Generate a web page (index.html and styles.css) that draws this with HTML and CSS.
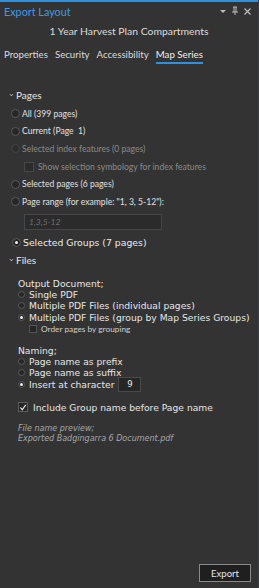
FILE: index.html
```html
<!DOCTYPE html>
<html lang="en">
<head>
    <meta charset="UTF-8">
    <title>Export Layout</title>
    <link rel="stylesheet" href="styles.css">
</head>
<body>
    <div class="panel">
        <div class="titlebar">
            <span class="title">Export Layout</span>
            <span class="wincontrols">
                <svg width="8" height="8" viewBox="0 0 8 8"><path d="M1 3 L7 3 L4 6 Z" fill="#bdbdbd"/></svg>
                <svg width="8" height="10" viewBox="0 0 8 10"><path d="M2 1 H6 M3 1 V6 M5 1 V6 M1 6 H7 M4 6 V9" stroke="#bdbdbd" stroke-width="1" fill="none"/></svg>
                <svg width="9" height="9" viewBox="0 0 9 9"><path d="M1.5 1.5 L7.5 7.5 M7.5 1.5 L1.5 7.5" stroke="#bdbdbd" stroke-width="1.2"/></svg>
            </span>
        </div>

        <div class="docname">1 Year Harvest Plan Compartments</div>

        <div class="tabs">
            <span class="tab">Properties</span>
            <span class="tab">Security</span>
            <span class="tab">Accessibility</span>
            <span class="tab active">Map Series</span>
        </div>

        <div class="group-head pages-head"><span class="chev">&#8964;</span>Pages</div>
        <div class="opt"><span class="radio"></span>All (399 pages)</div>
        <div class="opt"><span class="radio"></span>Current (Page&nbsp; 1)</div>
        <div class="opt disabled"><span class="radio"></span>Selected index features (0 pages)</div>
        <div class="opt sub disabled"><span class="check"></span>Show selection symbology for index features</div>
        <div class="opt"><span class="radio"></span>Selected pages (6 pages)</div>
        <div class="opt"><span class="radio"></span>Page range (for example: "1, 3, 5-12"):</div>
        <div class="range-box">1,3,5-12</div>
        <div class="opt big"><span class="radio on"></span>Selected Groups (7 pages)</div>

        <div class="group-head"><span class="chev">&#8964;</span>Files</div>

        <div class="files">
            <div class="label">Output Document;</div>
            <div class="vopt"><span class="radio"></span>Single PDF</div>
            <div class="vopt"><span class="radio"></span>Multiple PDF Files (individual pages)</div>
            <div class="vopt"><span class="radio on"></span>Multiple PDF Files (group by Map Series Groups)</div>
            <div class="vopt small"><span class="check"></span>Order pages by grouping</div>

            <div class="label naming">Naming;</div>
            <div class="vopt"><span class="radio"></span>Page name as prefix</div>
            <div class="vopt"><span class="radio"></span>Page name as suffix</div>
            <div class="vopt"><span class="radio on"></span>Insert at character <span class="charbox">9</span></div>

            <div class="vopt include"><span class="check checked">
                <svg width="9" height="9" viewBox="0 0 9 9"><path d="M1.5 4.5 L3.6 7 L7.6 1.5" stroke="#e8e8e8" stroke-width="1.3" fill="none"/></svg>
            </span>Include Group name before Page name</div>

            <div class="preview">
                File name preview;<br>
                Exported Badgingarra 6 Document.pdf
            </div>
        </div>

        <div class="footer">
            <button class="export">Export</button>
        </div>
    </div>
</body>
</html>
```

FILE: styles.css
```css
body {
    margin: 0;
    background-color: #333333;
}

.panel {
    height: 588px;
    display: flex;
    flex-direction: column;
    background-color: #333333;
    border-right: 1px solid #3b3b44;
    box-sizing: border-box;
    font-family: Lato, sans-serif;
    color: #e2e2e2;
}

.titlebar {
    border-top: 2px solid #2f8fe0;
    height: 18px;
    display: flex;
    align-items: center;
    justify-content: space-between;
    padding: 0 4px;
}
.title {
    color: #3e9be6;
    font-size: 10.8px;
}
.wincontrols {
    display: flex;
    align-items: center;
    gap: 4px;
    padding-right: 2px;
}

.docname {
    margin-top: 2px;
    line-height: 18px;
    text-align: center;
    font-size: 10.4px;
    color: #dcdcdc;
}

.tabs {
    margin-top: 6px;
    display: flex;
    gap: 7px;
    padding-left: 4px;
    font-size: 9.7px;
}
.tab {
    line-height: 16px;
    border-bottom: 2px solid transparent;
    color: #dcdcdc;
}
.tab.active {
    color: #f0f0f0;
    border-bottom-color: #2f8fe0;
}

.group-head {
    display: flex;
    align-items: center;
    line-height: 16px;
    padding-left: 8px;
    font-size: 10px;
    color: #e6e6e6;
}
.pages-head {
    margin-top: 23px;
    margin-bottom: 2px;
}
.chev {
    font-size: 8px;
    width: 7px;
    color: #bbbbbb;
    margin-right: 1px;
    position: relative;
    top: -2px;
}

.opt {
    display: flex;
    align-items: center;
    height: 17.6px;
    padding-left: 11px;
    font-size: 8.6px;
    color: #e0e0e0;
}
.opt.disabled {
    color: #8a8a8a;
}
.opt.sub {
    padding-left: 24px;
}
.opt.big {
    margin-top: 4px;
    height: 18px;
    padding-left: 12px;
    font-family: "DejaVu Sans", sans-serif;
    font-size: 9.3px;
    color: #ececec;
}

.radio {
    width: 9px;
    height: 9px;
    border-radius: 50%;
    border: 1px solid #5a5a5a;
    background-color: #262626;
    margin-right: 2px;
    flex: none;
    box-sizing: border-box;
    position: relative;
}
.radio.on::after {
    content: "";
    position: absolute;
    left: 2px;
    top: 2px;
    width: 3px;
    height: 3px;
    border-radius: 50%;
    background-color: #f2f2f2;
}
.opt.disabled .radio {
    border-color: #444;
    background-color: #2e2e2e;
}

.check {
    width: 10px;
    height: 10px;
    border: 1px solid #555;
    background-color: #262626;
    margin-right: 4px;
    flex: none;
    box-sizing: border-box;
    display: flex;
    align-items: center;
    justify-content: center;
}
.opt.disabled .check {
    border-color: #474747;
    background-color: #2c2c2c;
}

.range-box {
    margin: 3px 0 0 24px;
    width: 138px;
    height: 16px;
    box-sizing: border-box;
    border: 1px solid #464646;
    background-color: #2b2b2b;
    padding-left: 4px;
    line-height: 14px;
    font-size: 8.5px;
    font-style: italic;
    color: #707070;
}

.files {
    padding: 10px 0 0 18px;
    font-family: "DejaVu Sans", sans-serif;
    font-size: 9.2px;
    color: #e6e6e6;
}
.label {
    line-height: 11px;
}
.naming {
    margin-top: 10px;
}
.vopt {
    display: flex;
    align-items: center;
    height: 11.5px;
}
.vopt .radio {
    width: 7px;
    height: 7px;
    margin-right: 4px;
}
.vopt .radio.on::after {
    left: 1px;
    top: 1px;
}
.vopt.small {
    padding-left: 11px;
    font-family: Lato, sans-serif;
    font-size: 8.3px;
    color: #d0d0d0;
}
.vopt.small .check {
    width: 8px;
    height: 8px;
}
.charbox {
    margin-left: 4px;
    width: 23px;
    height: 15px;
    box-sizing: border-box;
    border: 1px solid #4a4a4a;
    background-color: #262626;
    font-size: 8.5px;
    line-height: 13px;
    text-align: center;
}
.include {
    margin-top: 10px;
    height: 14px;
}
.include .check {
    width: 10px;
    height: 10px;
    margin-right: 5px;
    border-color: #5c5c5c;
}

.preview {
    margin-top: 10px;
    line-height: 9.5px;
    font-size: 8px;
    font-style: italic;
    color: #a8a8a8;
}

.footer {
    margin-top: auto;
    display: flex;
    justify-content: flex-end;
    padding: 0 7px 6px 0;
}
.export {
    width: 52px;
    height: 18px;
    background-color: #1f1f1f;
    border: 1px solid #8a8a8a;
    color: #e6e6e6;
    font-family: Lato, sans-serif;
    font-size: 9.5px;
    padding: 0;
}
```
